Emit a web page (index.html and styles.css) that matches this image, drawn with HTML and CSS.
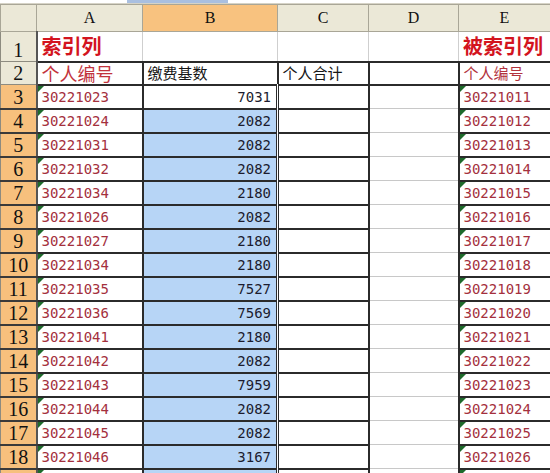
FILE: index.html
```html
<!DOCTYPE html>
<html>
<head>
<meta charset="utf-8">
<link rel="stylesheet" href="styles.css">
</head>
<body>
<div class="strip"><div class="strip-gap"></div><div class="strip-blue"></div></div>
<table class="sheet">
<colgroup><col class="c0"><col class="c1"><col class="c2"><col class="c3"><col class="c4"><col class="c5"></colgroup>
<tr class="hrow"><td class="ch corner"></td><td class="ch">A</td><td class="ch sel">B</td><td class="ch">C</td><td class="ch">D</td><td class="ch">E</td></tr>
<tr class="r1"><td class="rh">1</td><td class="lt title">索引列</td><td class="lt"></td><td class="lt"></td><td class="lt"></td><td class="lt title">被索引列</td></tr>
<tr class="r2"><td class="rh">2</td><td class="dk big-red">个人编号</td><td class="dk lbl">缴费基数</td><td class="dk lbl">个人合计</td><td class="dk"></td><td class="dk sm-red">个人编号</td></tr>
<tr class="r"><td class="rh or">3</td><td class="dk id t">30221023</td><td class="dk num first">7031</td><td class="dk"></td><td class="dl"></td><td class="dk id t">30221011</td></tr>
<tr class="r"><td class="rh or">4</td><td class="dk id t">30221024</td><td class="dk num">2082</td><td class="dk"></td><td class="dl"></td><td class="dk id t">30221012</td></tr>
<tr class="r"><td class="rh or">5</td><td class="dk id t">30221031</td><td class="dk num">2082</td><td class="dk"></td><td class="dl"></td><td class="dk id t">30221013</td></tr>
<tr class="r"><td class="rh or">6</td><td class="dk id t">30221032</td><td class="dk num">2082</td><td class="dk"></td><td class="dl"></td><td class="dk id t">30221014</td></tr>
<tr class="r"><td class="rh or">7</td><td class="dk id t">30221034</td><td class="dk num">2180</td><td class="dk"></td><td class="dl"></td><td class="dk id t">30221015</td></tr>
<tr class="r"><td class="rh or">8</td><td class="dk id t">30221026</td><td class="dk num">2082</td><td class="dk"></td><td class="dl"></td><td class="dk id t">30221016</td></tr>
<tr class="r"><td class="rh or">9</td><td class="dk id t">30221027</td><td class="dk num">2180</td><td class="dk"></td><td class="dl"></td><td class="dk id t">30221017</td></tr>
<tr class="r"><td class="rh or">10</td><td class="dk id t">30221034</td><td class="dk num">2180</td><td class="dk"></td><td class="dl"></td><td class="dk id t">30221018</td></tr>
<tr class="r"><td class="rh or">11</td><td class="dk id t">30221035</td><td class="dk num">7527</td><td class="dk"></td><td class="dl"></td><td class="dk id t">30221019</td></tr>
<tr class="r"><td class="rh or">12</td><td class="dk id t">30221036</td><td class="dk num">7569</td><td class="dk"></td><td class="dl"></td><td class="dk id t">30221020</td></tr>
<tr class="r"><td class="rh or">13</td><td class="dk id t">30221041</td><td class="dk num">2180</td><td class="dk"></td><td class="dl"></td><td class="dk id t">30221021</td></tr>
<tr class="r"><td class="rh or">14</td><td class="dk id t">30221042</td><td class="dk num">2082</td><td class="dk"></td><td class="dl"></td><td class="dk id t">30221022</td></tr>
<tr class="r"><td class="rh or">15</td><td class="dk id t">30221043</td><td class="dk num">7959</td><td class="dk"></td><td class="dl"></td><td class="dk id t">30221023</td></tr>
<tr class="r"><td class="rh or">16</td><td class="dk id t">30221044</td><td class="dk num">2082</td><td class="dk"></td><td class="dl"></td><td class="dk id t">30221024</td></tr>
<tr class="r"><td class="rh or">17</td><td class="dk id t">30221045</td><td class="dk num">2082</td><td class="dk"></td><td class="dl"></td><td class="dk id t">30221025</td></tr>
<tr class="r"><td class="rh or">18</td><td class="dk id t">30221046</td><td class="dk num">3167</td><td class="dk"></td><td class="dl"></td><td class="dk id t">30221026</td></tr>
<tr class="r"><td class="rh or"></td><td class="dk t"></td><td class="dk num"></td><td class="dk"></td><td class="dl"></td><td class="dk t"></td></tr>
</table>
</body>
</html>
```
FILE: styles.css
```css
html, body {
  margin: 0;
  padding: 0;
  background: #fff;
  overflow: hidden;
  width: 550px;
  height: 473px;
}
.strip {
  height: 4px;
  display: flex;
  background: #fff;
  border-bottom: 1px solid #d6d3c6;
  box-sizing: border-box;
}
.strip-gap { width: 127px; }
.strip-blue { width: 101px; background: #a9bfe0; }
.sheet {
  border-collapse: collapse;
  table-layout: fixed;
  width: 550px;
}
.c0 { width: 36px; }
.c1 { width: 106px; }
.c2 { width: 135px; }
.c3 { width: 91px; }
.c4 { width: 90px; }
.c5 { width: 92px; }
td {
  padding: 0;
  white-space: nowrap;
  position: relative;
  vertical-align: bottom;
}
.hrow { height: 27px; }
.r1 { height: 30px; }
.r2 { height: 23px; }
.r { height: 24px; }
.ch {
  background: #ebe8d7;
  border: 1px solid #a9a697;
  text-align: center;
  vertical-align: middle;
  font-family: "Liberation Serif", serif;
  font-size: 16px;
  color: #111;
}
.ch.sel { background: #f8c27f; }
.rh {
  background: #ebe8d7;
  border: 1px solid #8d8b80;
  border-right: 2px solid #555;
  text-align: center;
  font-family: "Liberation Serif", serif;
  font-size: 20px;
  line-height: 20px;
  padding-bottom: 1px;
  color: #111;
}
.rh.or {
  background: #f7c07d;
  border-bottom: 2px solid #3a3a3a;
}
.lt { border: 1px solid #cfcfcf; }
.dk { border: 2px solid #2b2b2b; }
.dl {
  border-left: 2px solid #2b2b2b;
  border-right: 2px solid #2b2b2b;
  border-top: 1px solid #c8c8c8;
  border-bottom: 1px solid #c8c8c8;
}
.title {
  font-family: "Noto Sans CJK SC", sans-serif;
  font-weight: bold;
  font-size: 20px;
  line-height: 24px;
  color: #d3141e;
  padding: 0 0 3px 4px;
}
.big-red {
  font-family: "Noto Sans CJK SC", sans-serif;
  font-size: 18px;
  line-height: 20px;
  color: #c2333d;
  padding: 0 0 1px 4px;
}
.lbl {
  font-family: "Noto Sans CJK SC", sans-serif;
  font-size: 15px;
  line-height: 18px;
  color: #161616;
  padding: 0 0 2px 4px;
}
.sm-red {
  font-family: "Noto Sans CJK SC", sans-serif;
  font-size: 15px;
  line-height: 18px;
  color: #b2333d;
  padding: 0 0 2px 4px;
}
.id {
  font-family: "DejaVu Sans Mono", monospace;
  font-size: 14px;
  line-height: 18px;
  color: #a4303d;
  padding: 1px 0 0 4px;
  vertical-align: middle;
}
.num {
  background: #b7d5f6;
  border-right: 3px double #2b2b2b;
  font-family: "DejaVu Sans Mono", monospace;
  font-size: 14px;
  line-height: 18px;
  color: #1c1c2e;
  text-align: right;
  padding: 1px 5px 0 0;
  vertical-align: middle;
}
.num.first { background: #fff; }
.t::before {
  content: "";
  position: absolute;
  left: 0;
  top: 0;
  border-top: 6px solid #1d6a2b;
  border-right: 6px solid transparent;
}
```
